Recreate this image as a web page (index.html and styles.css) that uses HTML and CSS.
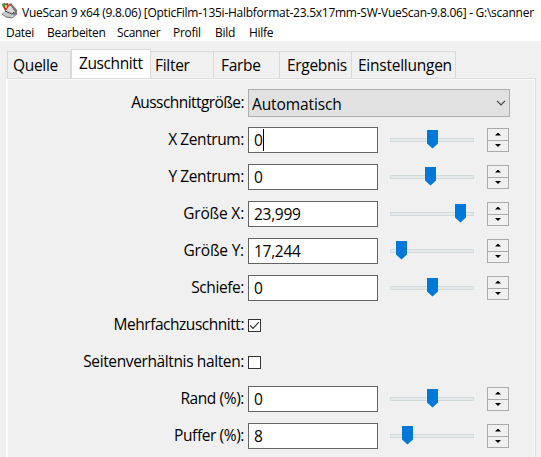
FILE: index.html
```
<!DOCTYPE html>
<html lang="de">
<head>
<meta charset="utf-8">
<title>VueScan</title>
<link rel="stylesheet" href="styles.css">
</head>
<body>
<header class="titlebar">
<svg class="logo" width="17" height="17" viewBox="0 0 17 17">
<path d="M1 1L7 0L9 5L4 8Z" fill="#cf3524"/>
<path d="M1 1L4 0L4 3L2 5Z" fill="#3e9b4b"/><path d="M4 2L6 2L6 5L4 5Z" fill="#f5c04a"/>
<path d="M8 1L10 0L16 7L16 11L12 13L8 6Z" fill="#777"/>
<path d="M8 3L10 3L14 9L11 11L5 8Z" fill="#d7d7d7"/>
<path d="M0 10L5 8L13 12L10 15L5 14Z" fill="#c7c7c7"/>
<path d="M1 11L5 14L11 15L16 11" fill="none" stroke="#777"/>
<path d="M4 8L11 11L13 9" fill="none" stroke="#444"/>
</svg>
<span class="title">VueScan 9 x64 (9.8.06) [OpticFilm-135i-Halbformat-23.5x17mm-SW-VueScan-9.8.06] - G:\scanner</span>
</header>
<nav class="menu"><span class="m1">Datei</span><span class="m2">Bearbeiten</span><span class="m3">Scanner</span><span class="m4">Profil</span><span class="m5">Bild</span><span class="m6">Hilfe</span></nav>
<main>
<div class="tabs"><div class="tab t1">Quelle</div><div class="tab active">Zuschnitt</div><div class="tab t3">Filter</div><div class="tab t4">Farbe</div><div class="tab t5">Ergebnis</div><div class="tab t6">Einstellungen</div></div>
<section class="panel" id="panel">
<div class="row"><label class="l-aus">Ausschnittgröße:</label><div class="select"><span>Automatisch</span><svg width="10" height="6" viewBox="0 0 10 6"><path d="M1 .8L5 4.8L9 .8" fill="none" stroke="#444" stroke-width="1.2"/></svg></div></div>
<div class="row"><label>X Zentrum:</label><div class="field focus">0</div><div class="slider"><i style="margin-left:37px"></i></div><div class="spin"><b></b><b></b></div></div>
<div class="row"><label>Y Zentrum:</label><div class="field">0</div><div class="slider"><i style="margin-left:35px"></i></div><div class="spin"><b></b><b></b></div></div>
<div class="row"><label class="l-size">Größe X:</label><div class="field">23,999</div><div class="slider"><i style="margin-left:65px"></i></div><div class="spin"><b></b><b></b></div></div>
<div class="row"><label class="l-size">Größe Y:</label><div class="field">17,244</div><div class="slider"><i style="margin-left:6px"></i></div><div class="spin"><b></b><b></b></div></div>
<div class="row"><label>Schiefe:</label><div class="field">0</div><div class="slider"><i style="margin-left:37px"></i></div><div class="spin"><b></b><b></b></div></div>
<div class="row"><label class="l-multi">Mehrfachzuschnitt:</label><div class="check"><svg width="11" height="11" viewBox="0 0 11 11"><path d="M1.2 5.5L4 8.4L9.8 2.2" fill="none" stroke="#333" stroke-width="1.2"/></svg></div></div>
<div class="row"><label class="l-ratio">Seitenverhältnis halten:</label><div class="check"></div></div>
<div class="row"><label>Rand (%):</label><div class="field">0</div><div class="slider"><i style="margin-left:37px"></i></div><div class="spin"><b></b><b></b></div></div>
<div class="row"><label>Puffer (%):</label><div class="field">8</div><div class="slider"><i style="margin-left:12px"></i></div><div class="spin"><b></b><b></b></div></div>
</section>
</main>
</body>
</html>
```
FILE: styles.css
```
*{box-sizing:border-box}
body{margin:0;width:541px;height:457px;overflow:hidden;background:#fff;color:#000;font-family:"Open Sans","Noto Sans",sans-serif;font-size:15.5px;white-space:nowrap}
.titlebar{height:24px;display:flex;align-items:center;padding-left:1px}
.logo{flex:none;margin-top:-1px}
.title{font-size:12px;letter-spacing:-.26px;margin-left:4px}
.menu{height:17px;display:flex;font-size:12px;line-height:17px;letter-spacing:-.3px;padding-left:6px}
.menu span{flex:none}
.m1{width:41px}.m2{width:70px}.m3{width:56px}.m4{width:42px}.m5{width:34px}
main{height:416px;background:#f0f0f0;padding:8px 5px 0 6px;display:flex;flex-direction:column}
.tabs{display:flex;height:29px;align-items:flex-end;padding-left:1px;flex:none}
.tab{height:27px;border:1px solid #d9d9d9;border-left:0;border-bottom:0;line-height:27px;letter-spacing:-.3px;flex:none}
.t1{width:64px;border-left:1px solid #d9d9d9;padding-left:5px}
.active{width:80px;height:29px;background:#fff;padding-left:7px;border-left:1px solid #d9d9d9;line-height:26px;letter-spacing:-.4px}
.t3{width:63px;padding-left:4px}.t4{width:66px;padding-left:7px}.t5{width:72px;padding-left:7px}.t6{width:104px;padding-left:6px;letter-spacing:-.25px}
.panel{flex:1;border:1px solid #dcdcdc;border-left:2px solid #fff;border-bottom:0;padding-top:5px;box-shadow:inset -1px 1px #fafafa}
.row{height:37px;display:flex;align-items:center}
label{width:236px;text-align:right;margin-right:4px;flex:none;letter-spacing:-.4px;position:relative;top:-1px}
.l-aus{letter-spacing:-.57px}
.l-size{letter-spacing:-.2px}
.l-multi{letter-spacing:-.47px}
.l-ratio{letter-spacing:-.38px}
.select{width:262px;height:28px;border:1px solid #adadad;background:#e1e1e1;display:flex;align-items:center;justify-content:space-between;padding:2px 3px 0 3px;letter-spacing:-.1px}
.select svg{margin-top:-1px}
.field{width:130px;height:26px;border:1px solid #646464;background:#fff;line-height:25px;padding-left:5px;flex:none;letter-spacing:-.3px;display:flex}
.focus::after{content:"";width:1px;height:22px;background:#000;margin-top:1px}
.slider{width:84px;height:20px;margin-left:12px;flex:none;background:linear-gradient(#d3dadb,#d3dadb) 0 8px/84px 4px no-repeat;display:flex;position:relative}
.slider::before{content:"";position:absolute;left:1px;top:9px;width:82px;height:2px;background:#e7eaea}
.slider i{width:11px;height:19px;background:#0078d7;clip-path:polygon(0 0,100% 0,100% 14px,50% 100%,0 14px);position:relative}
.spin{width:22px;height:24px;margin-left:13px;border:1px solid #aaa;display:grid;grid-template-rows:11px 11px}
.spin b{display:flex;align-items:center;justify-content:center;background:#f0f0f0}
.spin b:last-child{border-top:1px solid #aaa}
.spin b::after{content:"";width:6px;height:3px;background:#000;clip-path:polygon(50% 0,100% 100%,0 100%)}
.spin b:last-child::after{transform:scaleY(-1)}
.check{width:13px;height:13px;border:1px solid #333;background:#fff;position:relative;top:1px;display:flex}
```
